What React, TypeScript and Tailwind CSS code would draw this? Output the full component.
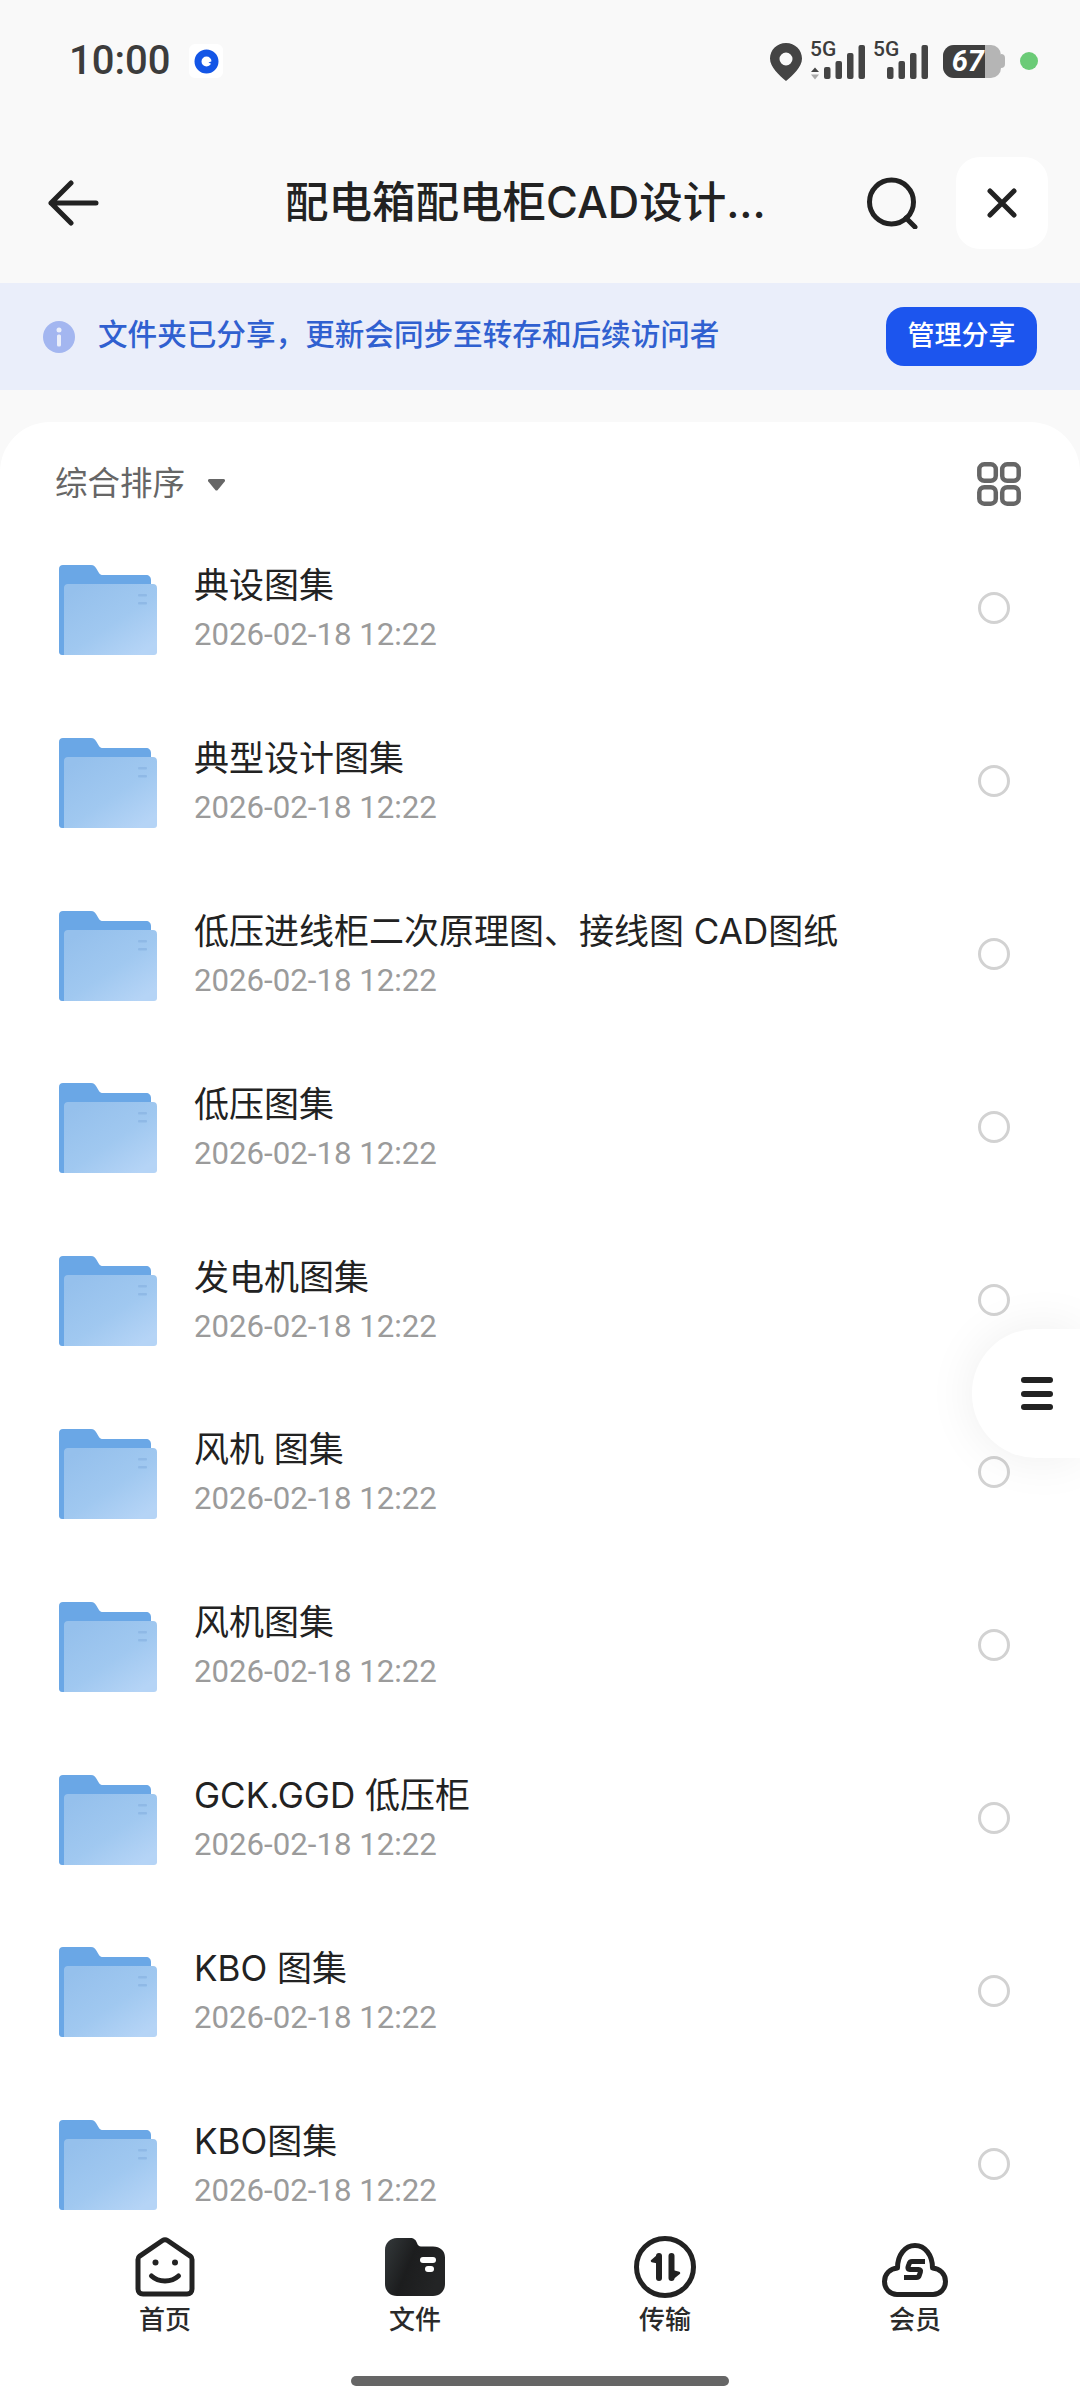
import type { ReactNode } from 'react';

const FOLDERS = [
  '典设图集',
  '典型设计图集',
  '低压进线柜二次原理图、接线图 CAD图纸',
  '低压图集',
  '发电机图集',
  '风机 图集',
  '风机图集',
  'GCK.GGD 低压柜',
  'KBO 图集',
  'KBO图集',
];

function SignalBars({ arrows }: { arrows?: boolean }) {
  return (
    <svg width="56" height="38" viewBox="0 0 56 38" className="block" aria-hidden="true">
      {arrows && (
        <>
          <path d="M1 30l4-4.500 4 4.500z" fill="#444" />
          <path d="M1 32.500l4 5 4-5z" fill="#aaa" />
        </>
      )}
      <rect x="14" y="25" width="6.500" height="12" rx="2" fill="#444" />
      <rect x="25.500" y="19" width="6.500" height="18" rx="2" fill="#444" />
      <rect x="37" y="11" width="6.500" height="26" rx="2" fill="#444" />
      <rect x="48.500" y="3" width="6.500" height="34" rx="2" fill="#444" />
    </svg>
  );
}

function StatusBar() {
  return (
    <div className="flex h-[122px] shrink-0 items-center justify-between pl-[69px] pr-[42px] text-[#3c3c3c]">
      <div className="flex items-center gap-[19px]">
        <span className="text-[40px] font-medium leading-none">10:00</span>
        <span className="flex h-[34px] w-[34px] items-center justify-center rounded-md bg-white">
          <svg width="25" height="25" viewBox="0 0 25 25" aria-hidden="true">
            <circle cx="12.500" cy="12.500" r="8.500" fill="none" stroke="#1456e6" strokeWidth="7" />
            <path d="M14.500 13.500l4-1.500v3.500z" fill="#1456e6" />
          </svg>
        </span>
      </div>
      <div className="flex items-center">
        <svg width="32" height="38" viewBox="0 0 32 38" className="mr-[8px] mt-[1px]" aria-hidden="true">
          <path
            fillRule="evenodd"
            d="M16 0C7 0 0 7 0 15.500 0 24 9 32 16 38c7-6 16-14 16-22.500C32 7 25 0 16 0zm0 9.500a6.500 6.500 0 1 1 0 13 6.500 6.500 0 0 1 0-13z"
            fill="#444"
          />
        </svg>
        <div className="relative mr-[7px] h-[38px] w-[56px]">
          <span className="absolute -top-[4px] left-0 text-[21px] font-medium leading-[22px]">5G</span>
          <SignalBars arrows />
        </div>
        <div className="relative mr-[14px] h-[38px] w-[56px]">
          <span className="absolute -top-[4px] left-0 text-[21px] font-medium leading-[22px]">5G</span>
          <SignalBars />
        </div>
        <div className="mr-[15px] flex items-center">
          <div className="flex h-[33px] w-[58px] overflow-hidden rounded-l-[11px] rounded-r-[10px] bg-[#b5b5b5]">
            <div className="flex w-[42px] items-center justify-end bg-[#3f3f3f] pr-[1px] text-[29px] font-bold italic leading-none text-white">
              67
            </div>
          </div>
          <span className="h-[14px] w-[4px] rounded-r-full bg-[#b5b5b5]" />
        </div>
        <span className="h-[18px] w-[18px] rounded-full bg-[#6bcb77]" />
      </div>
    </div>
  );
}

function Header() {
  return (
    <header className="flex h-[161px] shrink-0 items-center pl-[47px] pr-[32px]">
      <svg width="52" height="46" viewBox="0 0 52 46" fill="none" stroke="#222" strokeWidth="5" strokeLinecap="round" strokeLinejoin="round" aria-hidden="true">
        <path d="M49 23H4M24 3 4 23l20 20" />
      </svg>
      <h1 className="ml-[186px] flex-1 whitespace-nowrap font-['Inter','Noto_Sans_CJK_SC',sans-serif] text-[43.500px] font-medium leading-none text-[#222]">
        配电箱配电柜CAD设计...
      </h1>
      <div className="flex items-center gap-[38px]">
        <svg width="52" height="52" viewBox="0 0 52 52" fill="none" stroke="#222" strokeWidth="5" strokeLinecap="round" aria-hidden="true">
          <circle cx="25.500" cy="25" r="22" />
          <path d="M40 41l9 9" />
        </svg>
        <div className="flex h-[92px] w-[92px] items-center justify-center rounded-[24px] bg-white">
          <svg width="30" height="30" viewBox="0 0 30 30" stroke="#222" strokeWidth="5" strokeLinecap="round" aria-hidden="true">
            <path d="M3 3l24 24M27 3 3 27" />
          </svg>
        </div>
      </div>
    </header>
  );
}

function ShareBanner() {
  return (
    <div className="flex h-[107px] shrink-0 items-center justify-between bg-[#eaeefa] pl-[43px] pr-[43px]">
      <div className="flex items-center gap-[23px]">
        <svg width="32" height="32" viewBox="0 0 32 32" aria-hidden="true">
          <circle cx="16" cy="16" r="16" fill="#a3b6f0" />
          <circle cx="16" cy="9" r="2.500" fill="#eaeefa" />
          <rect x="14" y="13.500" width="4" height="12" rx="1.500" fill="#eaeefa" />
        </svg>
        <p className="mb-[2px] whitespace-nowrap text-[29.600px] font-medium leading-none text-[#3060d0]">
          文件夹已分享，更新会同步至转存和后续访问者
        </p>
      </div>
      <button className="flex h-[59px] w-[151px] items-center justify-center rounded-[18px] bg-[#1c55ee] text-[27px] font-medium text-white">
        管理分享
      </button>
    </div>
  );
}

function FolderIcon() {
  return (
    <svg width="98" height="90" viewBox="0 0 98 90" className="block shrink-0" aria-hidden="true">
      <defs>
        <linearGradient id="folderFront" x1="0.1" y1="0.1" x2="0.85" y2="0.95">
          <stop offset="0" stopColor="#95c0ec" />
          <stop offset="0.55" stopColor="#a0c8f0" />
          <stop offset="1" stopColor="#b5d4f6" />
        </linearGradient>
      </defs>
      <path
        d="M4 0h28c3 0 4 1.500 5 3l3 5c1 1.500 2 2 4 2h43c3 0 5 2 5 5v30H0V4c0-2.500 1.500-4 4-4z"
        fill="#6aa7e6"
      />
      <path d="M0 20h6v70H3c-2 0-3-1.500-3-3z" fill="#6aa7e6" />
      <path
        d="M5 23c0-2.500 1.500-4 4-4h85c2.500 0 4 1.500 4 4v64c0 2-1 3-3 3H5z"
        fill="url(#folderFront)"
      />
      <rect x="79" y="29" width="9" height="2.500" rx="1" fill="#8fb9e6" />
      <rect x="79" y="37" width="9" height="2.500" rx="1" fill="#8fb9e6" />
    </svg>
  );
}

function FolderRow({ name }: { name: string }) {
  return (
    <li className="flex h-[172.800px] shrink-0 items-center pl-[59px] pr-[70px]">
      <FolderIcon />
      <div className="ml-[37px] min-w-0 flex-1 pt-[1px]">
        <p className="truncate font-['Inter','Noto_Sans_CJK_SC',sans-serif] text-[35px] leading-[50px] text-[#222]">{name}</p>
        <p className="text-[31.200px] leading-[50px] text-[#9b9b9b]">2026-02-18 12:22</p>
      </div>
      <span className="mb-[3px] h-[32px] w-[32px] shrink-0 rounded-full border-[3px] border-[#d2d2d2]" />
    </li>
  );
}

function SortBar() {
  return (
    <div className="flex h-[101.600px] shrink-0 items-center justify-between pl-[55px] pr-[59px] pt-[23px]">
      <div className="flex items-center gap-[22px]">
        <span className="text-[32.500px] leading-none text-[#666]">综合排序</span>
        <svg width="19" height="13" viewBox="0 0 19 13" aria-hidden="true">
          <path d="M2.500 1h14c1.500 0 2 1.500 1.200 2.500l-7 8.500c-.6.700-1.800.700-2.400 0l-7-8.500C.5 2.500 1 1 2.500 1z" fill="#666" />
        </svg>
      </div>
      <svg width="44" height="44" viewBox="0 0 44 44" fill="none" stroke="#666" strokeWidth="4.500" aria-hidden="true">
        <rect x="2.300" y="2.300" width="16.500" height="16.500" rx="5" />
        <rect x="25.200" y="2.300" width="16.500" height="16.500" rx="5" />
        <rect x="2.300" y="25.200" width="16.500" height="16.500" rx="5" />
        <rect x="25.200" y="25.200" width="16.500" height="16.500" rx="5" />
      </svg>
    </div>
  );
}

function NavItem({ label, icon }: { label: string; icon: ReactNode }) {
  return (
    <div className="flex flex-col items-center">
      <div className="flex h-[64px] items-center justify-center">{icon}</div>
      <span className="mt-[6px] text-[26px] font-medium leading-[30px] text-[#2a2a2a]">{label}</span>
    </div>
  );
}

function BottomNav() {
  return (
    <nav className="relative h-[188px] shrink-0 bg-white pt-[20px]">
      <div className="grid grid-cols-4 px-[40px]">
        <NavItem
          label="首页"
          icon={
            <svg width="60" height="60" viewBox="0 0 60 60" fill="none" stroke="#222" strokeWidth="5" strokeLinecap="round" strokeLinejoin="round" aria-hidden="true">
              <path d="M3 22.500c0-1.500.5-2.500 1.700-3.400L27.500 3.500c1.500-1 3.500-1 5 0l22.800 15.600c1.200.9 1.700 1.900 1.700 3.400V52c0 3-2 5-5 5H8c-3 0-5-2-5-5z" />
              <path d="M16.500 39c7 6.500 20 6.500 27 0" />
              <circle cx="20.500" cy="25.500" r="3" fill="#222" stroke="none" />
              <circle cx="40" cy="25.500" r="3" fill="#222" stroke="none" />
            </svg>
          }
        />
        <NavItem
          label="文件"
          icon={
            <svg width="60" height="58" viewBox="0 0 60 58" aria-hidden="true">
              <defs>
                <linearGradient id="filesFill" x1="0" y1="0" x2="1" y2="0.4">
                  <stop offset="0" stopColor="#34393b" />
                  <stop offset="0.5" stopColor="#1c1d1e" />
                  <stop offset="1" stopColor="#232425" />
                </linearGradient>
              </defs>
              <path d="M12 0h13c4 0 6 2 7 5 .6 2 2 3.500 4 3.500h12c7 0 12 4 12 11V46c0 7-5 12-12 12H12C5 58 0 53 0 46V12C0 5 5 0 12 0z" fill="url(#filesFill)" />
              <rect x="35" y="19" width="16" height="6" rx="3" fill="#fff" />
              <rect x="40" y="28" width="9" height="6" rx="3" fill="#fff" />
            </svg>
          }
        />
        <NavItem
          label="传输"
          icon={
            <svg width="62" height="62" viewBox="0 0 62 62" fill="none" aria-hidden="true">
              <circle cx="31" cy="31" r="28.500" stroke="#222" strokeWidth="5" />
              <path d="M25 20v22" stroke="#222" strokeWidth="6" strokeLinecap="round" />
              <path d="M25 19l-7 6 7 1.500z" fill="#222" stroke="#222" strokeWidth="2.500" strokeLinejoin="round" />
              <path d="M37.500 20v22" stroke="#222" strokeWidth="6" strokeLinecap="round" />
              <path d="M37.500 43l7.500-6-7.500-2z" fill="#222" stroke="#222" strokeWidth="2.500" strokeLinejoin="round" />
            </svg>
          }
        />
        <NavItem
          label="会员"
          icon={
            <svg width="66" height="54" viewBox="0 0 66 54" fill="none" aria-hidden="true" className="mt-[5px]">
              <path d="M15 51.500C8 51.500 2.500 46 2.500 38.500 2.500 31 8 25.500 15.500 25 15.500 12 23 2.500 33 2.500S50.500 12 50.500 25C58 25.500 63.500 31 63.500 38.500 63.500 46 58 51.500 51 51.500z" stroke="#222" strokeWidth="5" strokeLinejoin="round" />
              <path d="M43 18.500H30c-1.500 0-2.500.8-3 2.500l-1 3c-.5 1.500.2 2.500 1.700 2.500h9c1.500 0 2.200 1 1.700 2.500l-1 3c-.5 1.700-1.500 2.500-3 2.500H22" stroke="#222" strokeWidth="5" strokeLinejoin="round" />
            </svg>
          }
        />
      </div>
      <div className="absolute left-[351px] top-[161px] h-[10px] w-[378px] rounded-full bg-[#666]" />
    </nav>
  );
}

export default function App() {
  return (
    <div
      lang="zh-CN"
      className="relative flex h-[2403px] w-[1080px] flex-col overflow-hidden bg-[#f9f9f9] font-['Roboto','Noto_Sans_CJK_SC',sans-serif]"
    >
      <StatusBar />
      <Header />
      <ShareBanner />
      <main className="mt-[32px] flex min-h-0 flex-1 flex-col overflow-hidden rounded-t-[50px] bg-white">
        <SortBar />
        <ul className="flex flex-col">
          {FOLDERS.map((name, i) => (
            <FolderRow key={i} name={name} />
          ))}
        </ul>
      </main>
      <BottomNav />
      {/* floating menu tab over the list */}
      <div className="absolute right-0 top-[1329px] flex h-[129px] w-[108px] items-center rounded-l-[64px] bg-white pl-[49px] shadow-[0_0_50px_rgba(0,0,0,0.07)]">
        <div className="flex w-[32px] flex-col gap-[7.500px]">
          <span className="h-[6px] rounded-full bg-[#222]" />
          <span className="h-[6px] rounded-full bg-[#222]" />
          <span className="h-[6px] rounded-full bg-[#222]" />
        </div>
      </div>
    </div>
  );
}
